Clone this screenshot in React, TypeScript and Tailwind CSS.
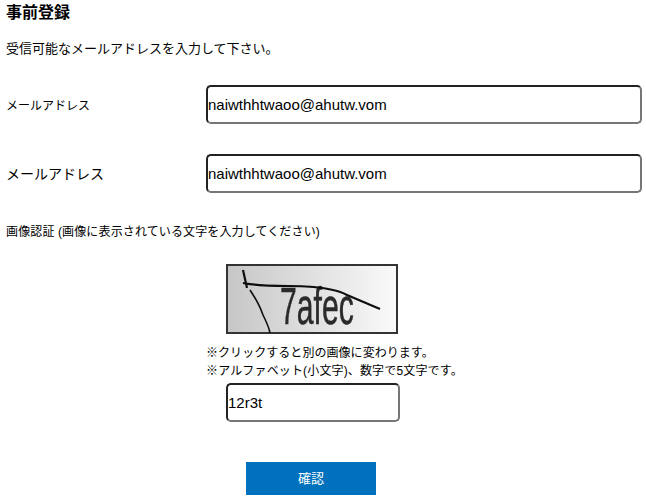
const fieldClass =
  "block h-[39px] rounded-[5px] border-2 border-t-[#222222] border-l-[#222222] border-r-[#767676] border-b-[#767676] bg-white text-[15px] text-black outline-none"

function CaptchaImage() {
  return (
    <svg viewBox="0 0 172 70" className="block h-[70px] w-[172px]">
      <defs>
        <linearGradient id="captchaBg" x1="0" y1="0" x2="1" y2="0">
          <stop offset="0" stopColor="#c6c6c6" />
          <stop offset="1" stopColor="#fafafa" />
        </linearGradient>
        <filter id="captchaBlur">
          <feGaussianBlur stdDeviation="0.6" />
        </filter>
      </defs>
      <rect x="1" y="1" width="170" height="68" fill="url(#captchaBg)" stroke="#333333" strokeWidth="2" />
      <g filter="url(#captchaBlur)">
        <text
          transform="translate(54 60) scale(0.58 1)"
          fill="#2a2a2a"
          stroke="#2a2a2a"
          strokeWidth="0.5"
          fontFamily="'Liberation Sans', sans-serif"
          fontSize="52"
        >
          7afec
        </text>
        <path
          d="M17 6 L21 24 M17 19 C32 22 48 22 62 22 C80 22 95 23 107 26 C113 27 117 29 121 31 L154 45"
          fill="none"
          stroke="#111111"
          strokeWidth="2.2"
        />
        <path d="M24 26 C30 35 34 42 37 51 C40 57 43 63 44 69" fill="none" stroke="#111111" strokeWidth="1.6" />
      </g>
    </svg>
  )
}

export default function App() {
  return (
    <div className="h-[500px] w-[646px] overflow-hidden bg-white pl-[6px] pt-[3px] font-['Liberation_Sans','Noto_Sans_CJK_JP',sans-serif] text-black">
      <h1 className="h-[20px] text-[16px] leading-[20px] font-bold">事前登録</h1>
      <p className="mt-[16px] text-[13px] leading-[20px]">受信可能なメールアドレスを入力して下さい。</p>

      <div className="mt-[26px] flex items-center">
        <label className="w-[200px] pt-[3px] text-[12px] leading-[20px]">メールアドレス</label>
        <input readOnly defaultValue="naiwthhtwaoo@ahutw.vom" className={`${fieldClass} w-[436px]`} />
      </div>

      <div className="mt-[30px] flex items-center">
        <label className="w-[200px] text-[14px] leading-[20px]">メールアドレス</label>
        <input readOnly defaultValue="naiwthhtwaoo@ahutw.vom" className={`${fieldClass} w-[436px]`} />
      </div>

      <p className="mt-[29px] text-[12px] leading-[20px] tracking-[0.13px]">画像認証 (画像に表示されている文字を入力してください)</p>

      <div className="mt-[22px] ml-[220px]">
        <CaptchaImage />
      </div>

      <div className="mt-[10px] ml-[200px] text-[12px] leading-[18px]">
        <p className="tracking-[0.05px]">※クリックすると別の画像に変わります。</p>
        <p className="tracking-[0.15px]">※アルファベット(小文字)、数字で5文字です。</p>
      </div>

      <input readOnly defaultValue="12r3t" className={`${fieldClass} mt-[3px] ml-[220px] w-[174px]`} />

      <button className="mt-[40px] ml-[240px] block h-[33px] w-[130px] bg-[#0071bc] text-[13px] text-white">確認</button>
    </div>
  )
}
